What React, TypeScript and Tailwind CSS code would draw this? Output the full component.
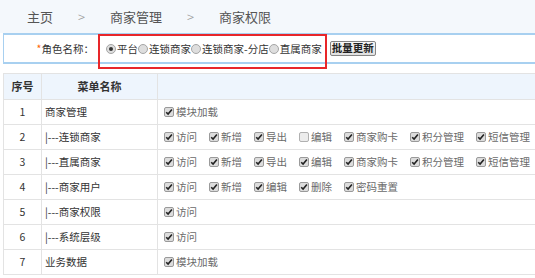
import React from "react";

const FONT = { fontFamily: '"Noto Sans CJK SC", "Liberation Sans", sans-serif' };

function Check({ on = true }: { on?: boolean }) {
  return (
    <span
      className={`inline-flex h-[10px] w-[10px] shrink-0 items-center justify-center rounded-[2px] border ${
        on ? "border-[#9a9a9a] bg-[#dcdcdc]" : "border-[#b0b0b0] bg-[#ececec]"
      }`}
    >
      {on && (
        <svg width="8" height="8" viewBox="0 0 8 8">
          <path d="M1.2 4.2 L3.1 6.1 L6.9 1.6" fill="none" stroke="#222" strokeWidth="1.6" />
        </svg>
      )}
    </span>
  );
}

function Item({ label, on = true }: { label: string; on?: boolean }) {
  return (
    <span className="mr-[12px] inline-flex shrink-0 items-center">
      <Check on={on} />
      <span className="ml-[2px] text-[#6a6a6a]">{label}</span>
    </span>
  );
}

function Radio({ on = false }: { on?: boolean }) {
  return (
    <span className="mr-[1px] inline-flex h-[10px] w-[10px] shrink-0 items-center justify-center rounded-full border border-[#a5a5a5] bg-[#dedede]">
      {on && <span className="h-[4px] w-[4px] rounded-full bg-[#333]" />}
    </span>
  );
}

type Row = { n: number; name: string; items: [string, boolean][] };

const rows: Row[] = [
  { n: 1, name: "商家管理", items: [["模块加载", true]] },
  {
    n: 2,
    name: "|---连锁商家",
    items: [
      ["访问", true],
      ["新增", true],
      ["导出", true],
      ["编辑", false],
      ["商家购卡", true],
      ["积分管理", true],
      ["短信管理", true],
    ],
  },
  {
    n: 3,
    name: "|---直属商家",
    items: [
      ["访问", true],
      ["新增", true],
      ["导出", true],
      ["编辑", true],
      ["商家购卡", true],
      ["积分管理", true],
      ["短信管理", true],
    ],
  },
  {
    n: 4,
    name: "|---商家用户",
    items: [
      ["访问", true],
      ["新增", true],
      ["编辑", true],
      ["删除", true],
      ["密码重置", true],
    ],
  },
  { n: 5, name: "|---商家权限", items: [["访问", true]] },
  { n: 6, name: "|---系统层级", items: [["访问", true]] },
  { n: 7, name: "业务数据", items: [["模块加载", true]] },
];

export default function App() {
  return (
    <div className="relative h-[278px] w-[535px] overflow-hidden bg-white" style={FONT}>
      {/* breadcrumb */}
      <div className="flex h-[33px] items-center bg-[#f4f8fc] pl-[27px] text-[13px] text-[#555]">
        <span>主页</span>
        <span className="mx-[25px] font-light text-[#999]">&gt;</span>
        <span>商家管理</span>
        <span className="mx-[25px] font-light text-[#999]">&gt;</span>
        <span>商家权限</span>
      </div>

      <div className="pl-[3px]">
        {/* form bar */}
        <div className="flex h-[31px] items-center border-y-2 border-l border-[#a8d0f0] bg-white text-[10.5px] text-[#333]">
          <span className="w-[90px] shrink-0 text-right">
            <span className="text-[#f60]">*</span>角色名称：
          </span>
          <div className="ml-[12px] flex shrink-0 items-center">
            <Radio on />
            <span>平台</span>
            <Radio />
            <span>连锁商家</span>
            <Radio />
            <span>连锁商家-分店</span>
            <Radio />
            <span>直属商家</span>
          </div>
          <button className="ml-[8px] flex h-[15px] shrink-0 items-center rounded-[2px] border border-[#858585] bg-gradient-to-b from-[#f8f8f8] to-[#e0e0e0] px-[1px] text-[10.5px] font-semibold leading-none text-[#222]">
            批量更新
          </button>
        </div>

        {/* table */}
        <div className="mt-[9px] border-l border-[#e3e3e3] text-[10.5px]">
          <div className="flex h-[27px] border-y border-[#e3e3e3] bg-[#eef5fd] text-[11px] font-bold text-[#333]">
            <div className="flex w-[38px] shrink-0 items-center justify-center border-r border-[#e3e3e3]">序号</div>
            <div className="flex w-[116px] shrink-0 items-center justify-center border-r border-[#e3e3e3]">菜单名称</div>
            <div className="min-w-0 flex-1" />
          </div>
          {rows.map((r) => (
            <div key={r.n} className="flex h-[25px] border-b border-[#e3e3e3]">
              <div className="flex w-[38px] shrink-0 items-center justify-center border-r border-[#e3e3e3] text-[#333]">
                {r.n}
              </div>
              <div className="flex w-[116px] shrink-0 items-center whitespace-pre border-r border-[#e3e3e3] pl-[3px] text-[#333]">
                {r.name}
              </div>
              <div className="flex min-w-0 flex-1 items-center overflow-hidden whitespace-nowrap pl-[6px]">
                {r.items.map(([l, on], i) => (
                  <Item key={i} label={l} on={on} />
                ))}
              </div>
            </div>
          ))}
        </div>
      </div>

      {/* red annotation box */}
      <div className="absolute left-[98px] top-[34px] h-[35px] w-[229px] border-2 border-[#e8262a]" />
    </div>
  );
}
